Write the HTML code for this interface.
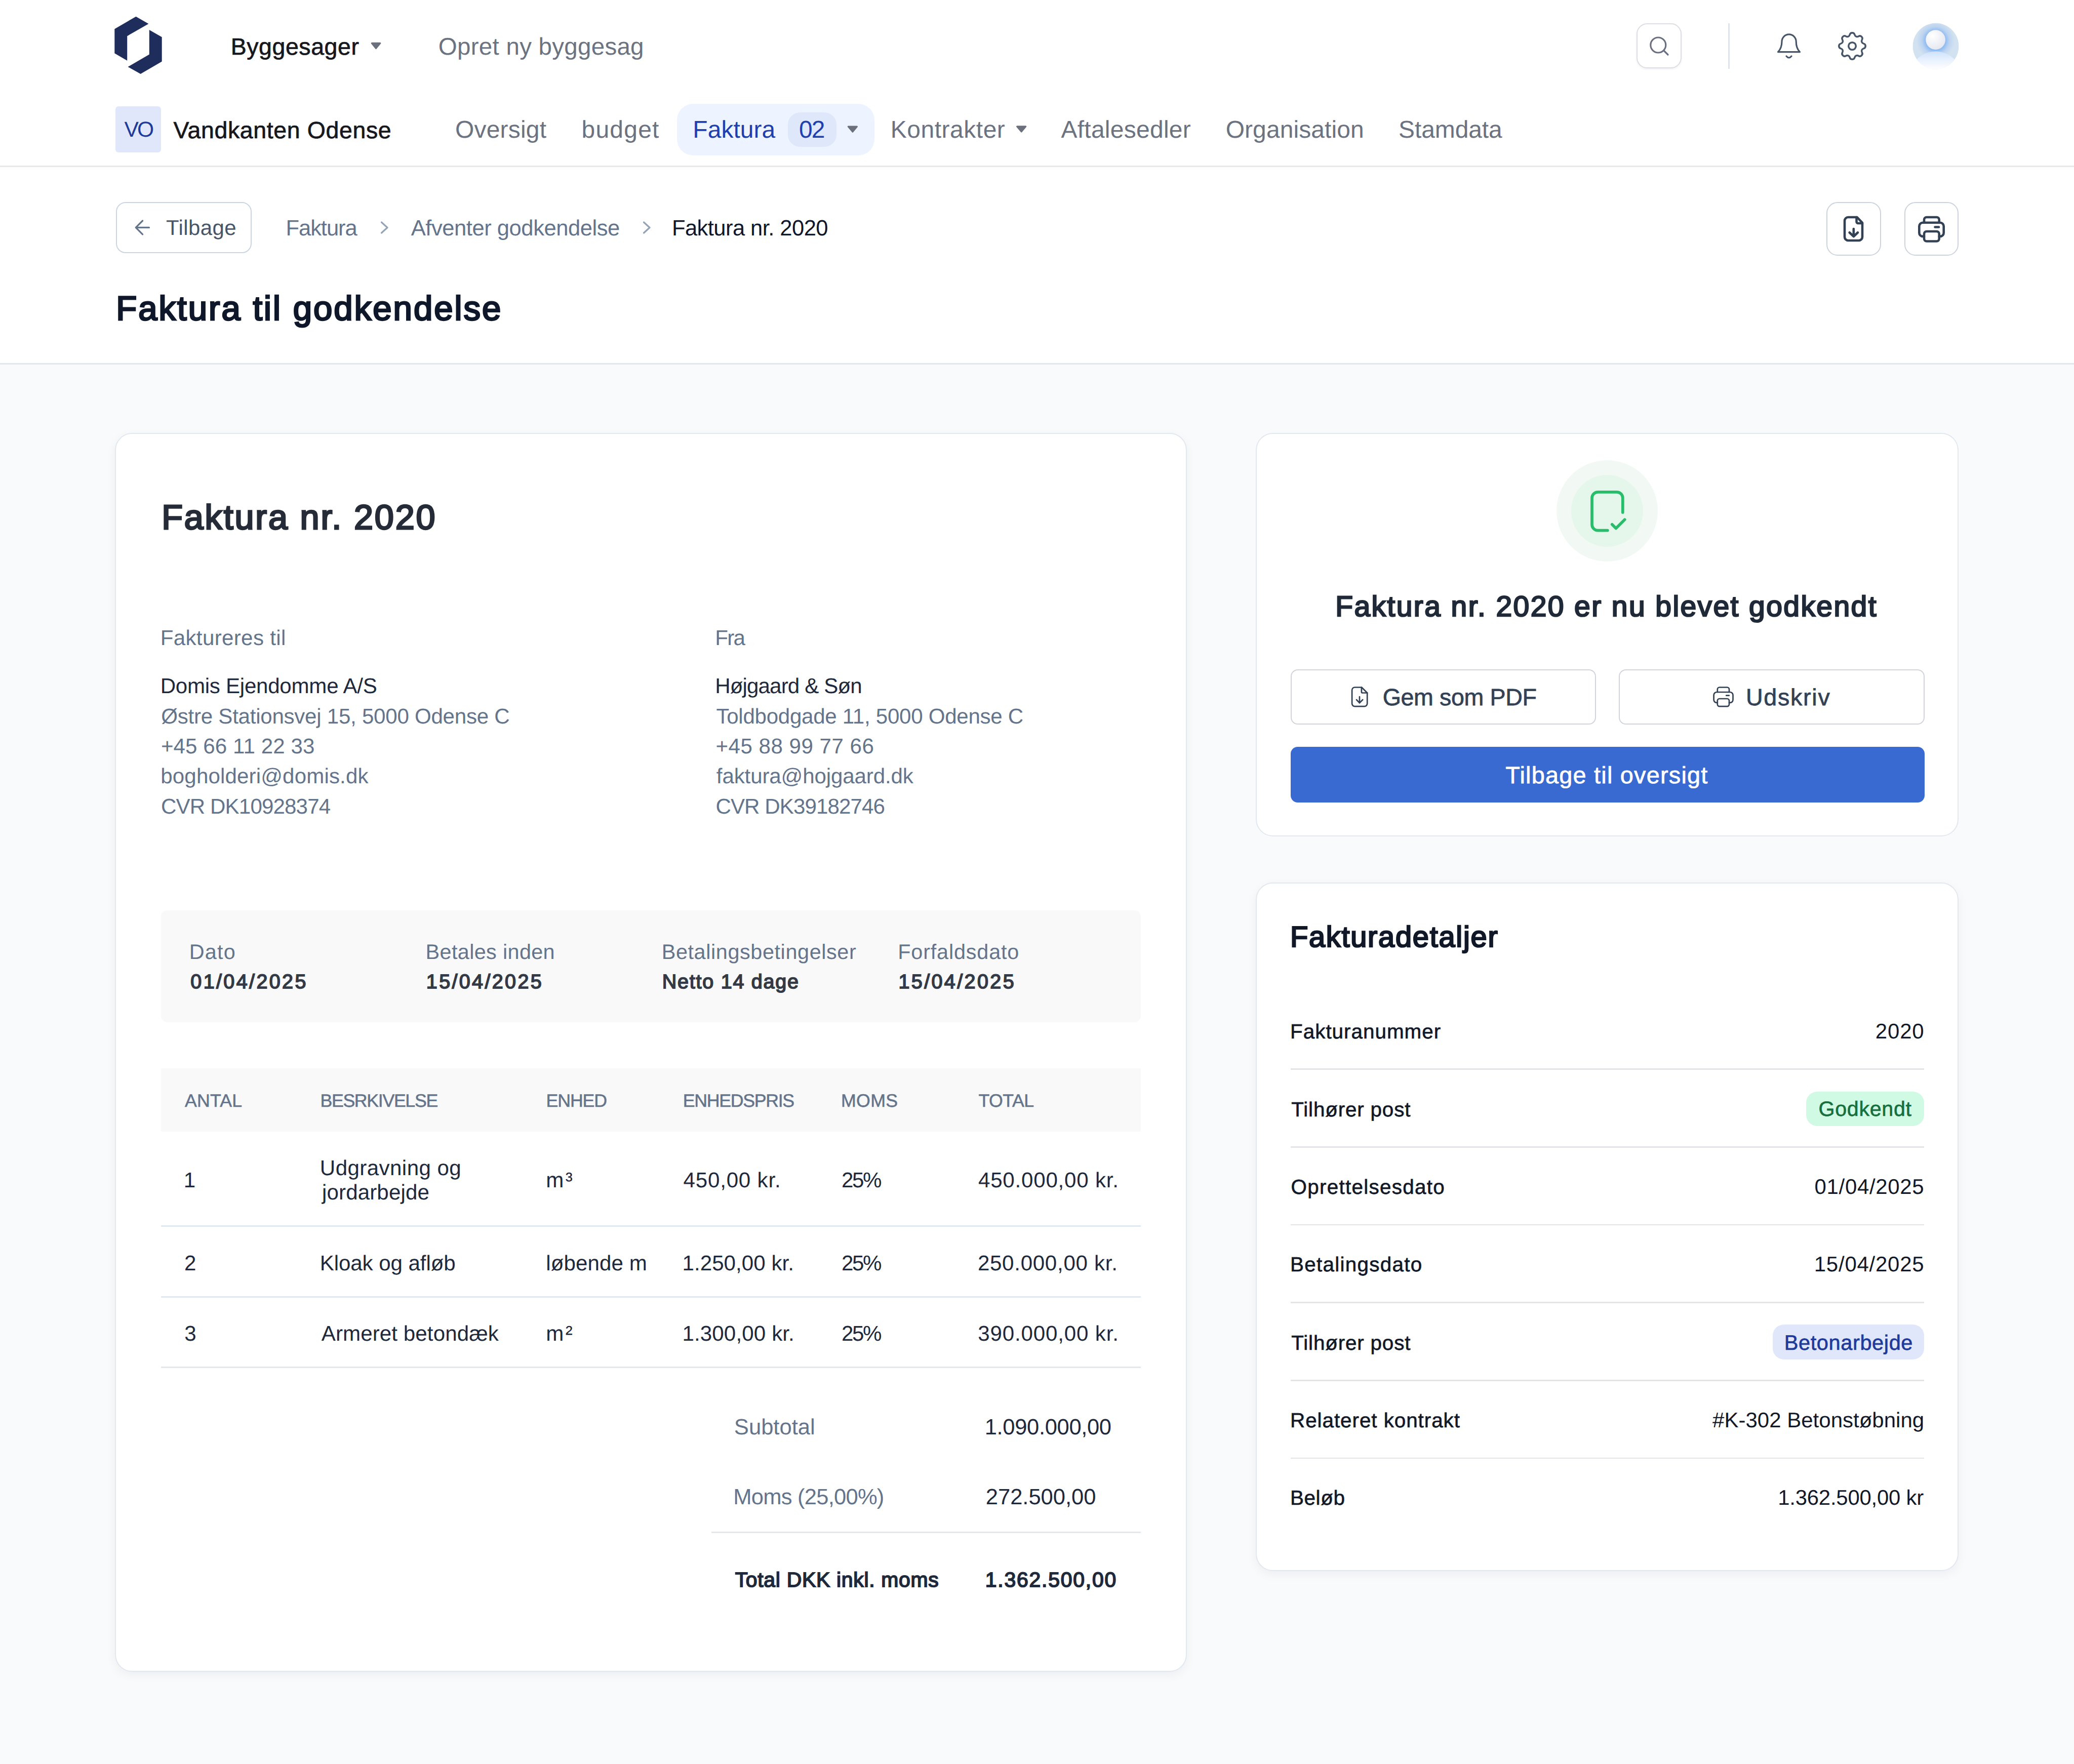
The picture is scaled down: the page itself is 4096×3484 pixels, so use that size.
<!DOCTYPE html>
<html><head><meta charset="utf-8"><style>
html,body{margin:0;padding:0;}
body{width:4096px;height:3484px;position:relative;overflow:hidden;background:#f8fafc;font-family:"Liberation Sans",sans-serif;}
.t{position:absolute;white-space:nowrap;line-height:1;text-rendering:geometricPrecision;}
.r{position:absolute;box-sizing:border-box;}
svg.ov{position:absolute;left:0;top:0;}
</style></head><body>
<div class="r" style="left:0px;top:0px;width:4096px;height:717px;background:#ffffff;"></div>
<div class="r" style="left:0px;top:717px;width:4096px;height:3px;background:#e1e7ef;"></div>
<div class="r" style="left:0px;top:327px;width:4096px;height:3px;background:#e8e9ec;"></div>
<div class="t" style="left:455.66px;top:69.18px;font-size:46.44px;color:#16181d;-webkit-text-stroke:0.74px #16181d;letter-spacing:0.60px;">Byggesager</div>
<div class="t" style="left:865.86px;top:68.63px;font-size:47.53px;color:#6b7280;letter-spacing:0.26px;">Opret ny byggesag</div>
<div class="r" style="left:3232px;top:46px;width:89px;height:89px;border:2.5px solid #dcdee3;border-radius:21px;background:#fff;box-shadow:0 2px 4px rgba(0,0,0,0.06);"></div>
<div class="r" style="left:3413px;top:46px;width:3px;height:90px;background:#dbe4f0;"></div>
<div class="r" style="left:228px;top:210px;width:90px;height:91px;background:#e0e7fa;border-radius:6px;"></div>
<div class="t" style="left:245.39px;top:235.14px;font-size:42.55px;color:#1e3a9a;">V</div>
<div class="t" style="left:271.09px;top:235.14px;font-size:42.55px;color:#1e3a9a;">O</div>
<div class="t" style="left:342.44px;top:233.88px;font-size:46.44px;color:#16181d;-webkit-text-stroke:0.74px #16181d;letter-spacing:0.64px;">Vandkanten Odense</div>
<div class="t" style="left:899.04px;top:232.95px;font-size:47.97px;color:#6b7280;letter-spacing:0.19px;">Oversigt</div>
<div class="t" style="left:1148.48px;top:232.95px;font-size:47.97px;color:#6b7280;letter-spacing:1.24px;">budget</div>
<div class="r" style="left:1337px;top:205px;width:390px;height:102px;background:#eef4ff;border-radius:32px;"></div>
<div class="t" style="left:1368.36px;top:232.95px;font-size:47.97px;color:#1e40af;letter-spacing:0.05px;">Faktura</div>
<div class="r" style="left:1556px;top:222px;width:96px;height:68px;background:#dfe7fb;border-radius:24px;"></div>
<div class="t" style="left:1578.08px;top:232.95px;font-size:47.97px;color:#1e40af;letter-spacing:-2.13px;">02</div>
<div class="t" style="left:1758.86px;top:232.95px;font-size:47.97px;color:#6b7280;letter-spacing:0.52px;">Kontrakter</div>
<div class="t" style="left:2095.46px;top:232.95px;font-size:47.97px;color:#6b7280;letter-spacing:0.27px;">Aftalesedler</div>
<div class="t" style="left:2420.64px;top:232.95px;font-size:47.97px;color:#6b7280;letter-spacing:0.10px;">Organisation</div>
<div class="t" style="left:2762.04px;top:232.95px;font-size:47.97px;color:#6b7280;letter-spacing:-0.08px;">Stamdata</div>
<div class="r" style="left:229px;top:399px;width:268px;height:101px;border:2px solid #cbd5e1;border-radius:19px;background:#fff;"></div>
<div class="t" style="left:327.95px;top:428.64px;font-size:41.96px;color:#475569;letter-spacing:0.43px;">Tilbage</div>
<div class="t" style="left:564.51px;top:429.77px;font-size:43.58px;color:#64748b;letter-spacing:-1.09px;">Faktura</div>
<div class="t" style="left:811.68px;top:429.77px;font-size:43.58px;color:#64748b;letter-spacing:-0.47px;">Afventer godkendelse</div>
<div class="t" style="left:1326.91px;top:429.77px;font-size:43.58px;color:#0f172a;letter-spacing:-0.58px;">Faktura nr. 2020</div>
<div class="r" style="left:3607px;top:399px;width:108px;height:106px;border:2.5px solid #cdd3dc;border-radius:22px;background:#fff;"></div>
<div class="r" style="left:3761px;top:399px;width:107px;height:106px;border:2.5px solid #cdd3dc;border-radius:22px;background:#fff;"></div>
<div class="t" style="left:229.14px;top:576.32px;font-size:67.13px;color:#0f172a;-webkit-text-stroke:3.02px #0f172a;letter-spacing:3.02px;">Faktura til godkendelse</div>
<div class="r" style="left:227px;top:855px;width:2117px;height:2447px;border:2.5px solid #e2e8f0;border-radius:34px;background:#fff;box-shadow:0 6px 20px rgba(15,23,42,0.05);"></div>
<div class="t" style="left:319.17px;top:988.24px;font-size:68.37px;color:#252b37;-webkit-text-stroke:3.08px #252b37;letter-spacing:2.84px;">Faktura nr. 2020</div>
<div class="t" style="left:316.63px;top:1239.22px;font-size:42.11px;color:#64748b;letter-spacing:0.34px;">Faktureres til</div>
<div class="t" style="left:316.63px;top:1333.72px;font-size:42.11px;color:#1e293b;letter-spacing:-0.27px;">Domis Ejendomme A/S</div>
<div class="t" style="left:318.32px;top:1393.52px;font-size:42.11px;color:#64748b;letter-spacing:-0.27px;">Østre Stationsvej 15, 5000 Odense C</div>
<div class="t" style="left:317.89px;top:1452.52px;font-size:42.11px;color:#64748b;letter-spacing:0.08px;">+45 66 11 22 33</div>
<div class="t" style="left:317.26px;top:1512.22px;font-size:42.11px;color:#64748b;letter-spacing:0.13px;">bogholderi@domis.dk</div>
<div class="t" style="left:317.89px;top:1572.12px;font-size:42.11px;color:#64748b;letter-spacing:-0.86px;">CVR DK10928374</div>
<div class="t" style="left:1412.13px;top:1239.22px;font-size:42.11px;color:#64748b;letter-spacing:-1.65px;">Fra</div>
<div class="t" style="left:1412.13px;top:1333.72px;font-size:42.11px;color:#1e293b;letter-spacing:-0.87px;">Højgaard & Søn</div>
<div class="t" style="left:1414.45px;top:1393.52px;font-size:42.11px;color:#64748b;letter-spacing:-0.29px;">Toldbodgade 11, 5000 Odense C</div>
<div class="t" style="left:1413.39px;top:1452.52px;font-size:42.11px;color:#64748b;letter-spacing:0.50px;">+45 88 99 77 66</div>
<div class="t" style="left:1414.87px;top:1512.22px;font-size:42.11px;color:#64748b;letter-spacing:-0.14px;">faktura@hojgaard.dk</div>
<div class="t" style="left:1413.39px;top:1572.12px;font-size:42.11px;color:#64748b;letter-spacing:-0.91px;">CVR DK39182746</div>
<div class="r" style="left:318px;top:1798px;width:1935px;height:221px;background:#f9f9fa;border-radius:12px;"></div>
<div class="t" style="left:373.69px;top:1860.14px;font-size:41.38px;color:#64748b;letter-spacing:1.22px;">Dato</div>
<div class="t" style="left:376.31px;top:1920.13px;font-size:39.51px;color:#333a46;-webkit-text-stroke:1.78px #333a46;letter-spacing:3.38px;">01/04/2025</div>
<div class="t" style="left:840.59px;top:1860.14px;font-size:41.38px;color:#64748b;letter-spacing:0.36px;">Betales inden</div>
<div class="t" style="left:841.83px;top:1920.13px;font-size:39.51px;color:#333a46;-webkit-text-stroke:1.78px #333a46;letter-spacing:3.35px;">15/04/2025</div>
<div class="t" style="left:1306.69px;top:1860.14px;font-size:41.38px;color:#64748b;letter-spacing:0.60px;">Betalingsbetingelser</div>
<div class="t" style="left:1307.73px;top:1920.13px;font-size:39.51px;color:#333a46;-webkit-text-stroke:1.78px #333a46;letter-spacing:1.76px;">Netto 14 dage</div>
<div class="t" style="left:1773.19px;top:1860.14px;font-size:41.38px;color:#64748b;letter-spacing:0.83px;">Forfaldsdato</div>
<div class="t" style="left:1774.43px;top:1920.13px;font-size:39.51px;color:#333a46;-webkit-text-stroke:1.78px #333a46;letter-spacing:3.39px;">15/04/2025</div>
<div class="r" style="left:318px;top:2110px;width:1935px;height:125px;background:#f9f9fa;"></div>
<div class="t" style="left:365.11px;top:2156.75px;font-size:35.71px;color:#64748b;-webkit-text-stroke:0.57px #64748b;letter-spacing:0.15px;">ANTAL</div>
<div class="t" style="left:632.43px;top:2156.75px;font-size:35.71px;color:#64748b;-webkit-text-stroke:0.57px #64748b;letter-spacing:-1.33px;">BESRKIVELSE</div>
<div class="t" style="left:1078.43px;top:2156.75px;font-size:35.71px;color:#64748b;-webkit-text-stroke:0.57px #64748b;letter-spacing:-1.07px;">ENHED</div>
<div class="t" style="left:1348.73px;top:2156.75px;font-size:35.71px;color:#64748b;-webkit-text-stroke:0.57px #64748b;letter-spacing:-1.31px;">ENHEDSPRIS</div>
<div class="t" style="left:1661.03px;top:2156.75px;font-size:35.71px;color:#64748b;-webkit-text-stroke:0.57px #64748b;letter-spacing:0.35px;">MOMS</div>
<div class="t" style="left:1932.39px;top:2156.75px;font-size:35.71px;color:#64748b;-webkit-text-stroke:0.57px #64748b;letter-spacing:-0.52px;">TOTAL</div>
<div class="r" style="left:318px;top:2420px;width:1935px;height:2.5px;background:#e2e8f0;"></div>
<div class="r" style="left:318px;top:2560px;width:1935px;height:2.5px;background:#e2e8f0;"></div>
<div class="r" style="left:318px;top:2699.2px;width:1935px;height:2.5px;background:#e2e8f0;"></div>
<div class="t" style="left:362.84px;top:2309.82px;font-size:42.11px;color:#1e293b;">1</div>
<div class="t" style="left:631.84px;top:2286.22px;font-size:42.11px;color:#1e293b;letter-spacing:0.41px;">Udgravning og</div>
<div class="t" style="left:636.05px;top:2334.42px;font-size:42.11px;color:#1e293b;letter-spacing:0.11px;">jordarbejde</div>
<div class="t" style="left:1078.26px;top:2309.82px;font-size:42.11px;color:#1e293b;letter-spacing:3.31px;">m³</div>
<div class="t" style="left:1349.55px;top:2309.82px;font-size:42.11px;color:#1e293b;letter-spacing:0.79px;">450,00 kr.</div>
<div class="t" style="left:1661.89px;top:2309.82px;font-size:42.11px;color:#1e293b;letter-spacing:-2.32px;">25%</div>
<div class="t" style="left:1931.95px;top:2309.82px;font-size:42.11px;color:#1e293b;letter-spacing:0.78px;">450.000,00 kr.</div>
<div class="t" style="left:363.89px;top:2473.82px;font-size:42.11px;color:#1e293b;">2</div>
<div class="t" style="left:631.63px;top:2473.82px;font-size:42.11px;color:#1e293b;letter-spacing:-0.08px;">Kloak og afløb</div>
<div class="t" style="left:1078.26px;top:2473.82px;font-size:42.11px;color:#1e293b;letter-spacing:0.09px;">løbende m</div>
<div class="t" style="left:1347.44px;top:2473.82px;font-size:42.11px;color:#1e293b;letter-spacing:0.05px;">1.250,00 kr.</div>
<div class="t" style="left:1661.89px;top:2473.82px;font-size:42.11px;color:#1e293b;letter-spacing:-2.32px;">25%</div>
<div class="t" style="left:1930.89px;top:2473.82px;font-size:42.11px;color:#1e293b;letter-spacing:0.70px;">250.000,00 kr.</div>
<div class="t" style="left:364.32px;top:2612.62px;font-size:42.11px;color:#1e293b;">3</div>
<div class="t" style="left:634.79px;top:2612.62px;font-size:42.11px;color:#1e293b;letter-spacing:0.08px;">Armeret betondæk</div>
<div class="t" style="left:1078.26px;top:2612.62px;font-size:42.11px;color:#1e293b;letter-spacing:3.31px;">m²</div>
<div class="t" style="left:1347.44px;top:2612.62px;font-size:42.11px;color:#1e293b;letter-spacing:0.12px;">1.300,00 kr.</div>
<div class="t" style="left:1661.89px;top:2612.62px;font-size:42.11px;color:#1e293b;letter-spacing:-2.32px;">25%</div>
<div class="t" style="left:1931.32px;top:2612.62px;font-size:42.11px;color:#1e293b;letter-spacing:0.82px;">390.000,00 kr.</div>
<div class="t" style="left:1449.84px;top:2797.97px;font-size:43.58px;color:#64748b;">Subtotal</div>
<div class="t" style="left:1944.73px;top:2797.97px;font-size:43.58px;color:#1e293b;letter-spacing:-0.37px;">1.090.000,00</div>
<div class="t" style="left:1448.31px;top:2935.97px;font-size:43.58px;color:#64748b;letter-spacing:-0.79px;">Moms (25,00%)</div>
<div class="t" style="left:1946.82px;top:2935.97px;font-size:43.58px;color:#1e293b;letter-spacing:-0.05px;">272.500,00</div>
<div class="r" style="left:1405px;top:3025px;width:848px;height:2.5px;background:#e2e8f0;"></div>
<div class="t" style="left:1451.70px;top:3099.74px;font-size:40.88px;color:#1e293b;-webkit-text-stroke:1.84px #1e293b;letter-spacing:0.72px;">Total DKK inkl. moms</div>
<div class="t" style="left:1945.85px;top:3099.74px;font-size:40.88px;color:#1e293b;-webkit-text-stroke:1.84px #1e293b;letter-spacing:1.79px;">1.362.500,00</div>
<div class="r" style="left:2480px;top:855px;width:1388px;height:797px;border:2.5px solid #e2e8f0;border-radius:34px;background:#fff;"></div>
<div class="r" style="left:3074px;top:909px;width:200px;height:200px;background:#f2f9f4;border-radius:50%;"></div>
<div class="r" style="left:3103px;top:938px;width:142px;height:142px;background:#e5f6ea;border-radius:50%;"></div>
<div class="t" style="left:2637.22px;top:1169.86px;font-size:56.96px;color:#1f2937;-webkit-text-stroke:2.56px #1f2937;letter-spacing:2.43px;">Faktura nr. 2020 er nu blevet godkendt</div>
<div class="r" style="left:2549px;top:1322px;width:603px;height:109px;border:2.5px solid #d1d5db;border-radius:14px;background:#fff;"></div>
<div class="r" style="left:3197px;top:1322px;width:604px;height:109px;border:2.5px solid #d1d5db;border-radius:14px;background:#fff;"></div>
<div class="t" style="left:2730.74px;top:1354.35px;font-size:46.59px;color:#334155;-webkit-text-stroke:0.75px #334155;letter-spacing:-0.38px;">Gem som PDF</div>
<div class="t" style="left:3447.88px;top:1354.35px;font-size:46.59px;color:#334155;-webkit-text-stroke:0.75px #334155;letter-spacing:1.77px;">Udskriv</div>
<div class="r" style="left:2549px;top:1475px;width:1252px;height:110px;background:#386ad1;border-radius:14px;"></div>
<div class="t" style="left:2973.30px;top:1507.81px;font-size:46.87px;color:#ffffff;-webkit-text-stroke:0.75px #ffffff;letter-spacing:1.22px;">Tilbage til oversigt</div>
<div class="r" style="left:2480px;top:1743px;width:1388px;height:1360px;border:2.5px solid #e2e8f0;border-radius:34px;background:#fff;box-shadow:0 6px 20px rgba(15,23,42,0.05);"></div>
<div class="t" style="left:2547.88px;top:1822.94px;font-size:57.79px;color:#111827;-webkit-text-stroke:2.60px #111827;letter-spacing:1.74px;">Fakturadetaljer</div>
<div class="t" style="left:2548.09px;top:2016.71px;font-size:40.43px;color:#111827;-webkit-text-stroke:0.65px #111827;letter-spacing:0.98px;">Fakturanummer</div>
<div class="t" style="left:2550.31px;top:2170.81px;font-size:40.43px;color:#111827;-webkit-text-stroke:0.65px #111827;letter-spacing:0.81px;">Tilhører post</div>
<div class="t" style="left:2549.50px;top:2324.31px;font-size:40.43px;color:#111827;-webkit-text-stroke:0.65px #111827;letter-spacing:1.27px;">Oprettelsesdato</div>
<div class="t" style="left:2548.09px;top:2477.41px;font-size:40.43px;color:#111827;-webkit-text-stroke:0.65px #111827;letter-spacing:1.27px;">Betalingsdato</div>
<div class="t" style="left:2550.31px;top:2631.51px;font-size:40.43px;color:#111827;-webkit-text-stroke:0.65px #111827;letter-spacing:0.81px;">Tilhører post</div>
<div class="t" style="left:2548.09px;top:2784.91px;font-size:40.43px;color:#111827;-webkit-text-stroke:0.65px #111827;letter-spacing:0.93px;">Relateret kontrakt</div>
<div class="t" style="left:2548.09px;top:2938.31px;font-size:40.43px;color:#111827;-webkit-text-stroke:0.65px #111827;letter-spacing:0.55px;">Beløb</div>
<div class="r" style="left:2549px;top:2110.2px;width:1251px;height:2.699999999999818px;background:#e3e4e8;"></div>
<div class="r" style="left:2549px;top:2263.9px;width:1251px;height:2.699999999999818px;background:#e3e4e8;"></div>
<div class="r" style="left:2549px;top:2417.6px;width:1251px;height:2.699999999999818px;background:#e3e4e8;"></div>
<div class="r" style="left:2549px;top:2571.3px;width:1251px;height:2.699999999999818px;background:#e3e4e8;"></div>
<div class="r" style="left:2549px;top:2725px;width:1251px;height:2.699999999999818px;background:#e3e4e8;"></div>
<div class="r" style="left:2549px;top:2878.7px;width:1251px;height:2.699999999999818px;background:#e3e4e8;"></div>
<div class="t" style="left:3703.80px;top:2015.74px;font-size:41.96px;color:#111827;letter-spacing:0.84px;">2020</div>
<div class="r" style="left:3567px;top:2156px;width:233px;height:68px;background:#d1fae5;border-radius:22px;"></div>
<div class="t" style="left:3591.57px;top:2170.20px;font-size:41.15px;color:#176f3d;-webkit-text-stroke:0.66px #176f3d;letter-spacing:0.71px;">Godkendt</div>
<div class="t" style="left:3583.62px;top:2323.34px;font-size:41.96px;color:#111827;letter-spacing:0.67px;">01/04/2025</div>
<div class="t" style="left:3582.75px;top:2476.44px;font-size:41.96px;color:#111827;letter-spacing:0.77px;">15/04/2025</div>
<div class="r" style="left:3501px;top:2616px;width:299px;height:69px;background:#e0e7fa;border-radius:22px;"></div>
<div class="t" style="left:3523.71px;top:2630.54px;font-size:41.57px;color:#1e3a9a;-webkit-text-stroke:0.67px #1e3a9a;letter-spacing:0.59px;">Betonarbejde</div>
<div class="t" style="left:3382.09px;top:2783.94px;font-size:41.96px;color:#111827;letter-spacing:0.03px;">#K-302 Betonstøbning</div>
<div class="t" style="left:3511.16px;top:2937.46px;font-size:41.82px;color:#111827;letter-spacing:-0.18px;">1.362.500,00 kr</div>
<svg class="ov" width="4096" height="3484" viewBox="0 0 4096 3484">
<defs>
<radialGradient id="avbg" gradientUnits="userSpaceOnUse" cx="3822.6" cy="80" r="38"><stop offset="0.5" stop-color="#8dbaf2"/><stop offset="0.72" stop-color="#bcd4f0"/><stop offset="1" stop-color="#d3e2f0"/></radialGradient>
<linearGradient id="avbody" gradientUnits="userSpaceOnUse" x1="0" y1="101" x2="0" y2="137"><stop offset="0" stop-color="#cce0fb"/><stop offset="0.4" stop-color="#e4effd"/><stop offset="0.8" stop-color="#f6f9fe"/><stop offset="1" stop-color="#fdfeff"/></linearGradient>
<radialGradient id="avhead" cx="0.35" cy="0.3" r="0.8"><stop offset="0" stop-color="#ffffff"/><stop offset="1" stop-color="#e3e6ef"/></radialGradient>
<clipPath id="avclip"><circle cx="3823" cy="91.2" r="45.6"/></clipPath>
</defs>
<!-- logo -->
<g fill="#1f2d5c">
<polygon points="226.3,57.2 268.5,32.7 293.4,47.0 251.2,71.2 251.2,119.8 226.3,105.3"/>
<polygon points="294.8,59 319.7,73.3 319.7,121.6 277.6,146.1 252.6,132 294.8,107.5"/>
</g>
<!-- triangles -->
<g fill="#6c707c" stroke="#6c707c" stroke-width="3" stroke-linejoin="round">
<polygon points="734.2,85.3 750.9,85.3 742.5,95.6"/>
<polygon points="1675.3,250 1692.5,250 1683.9,260.3"/>
<polygon points="2008.6,249.8 2025.8,249.8 2017.2,260.1"/>
</g>
<!-- search icon -->
<g fill="none" stroke="#6b7080" stroke-width="3.2" stroke-linecap="round">
<circle cx="3274.8" cy="89" r="15"/>
<line x1="3286" y1="100" x2="3294" y2="108"/>
</g>
<!-- bell -->
<g fill="none" stroke="#475569" stroke-width="3.2" stroke-linecap="round" stroke-linejoin="round">
<path d="M3511.5,102.6 H3554.5 M3511.5,102.6 C3517,97 3519,90 3519,82 A14.1,14.1 0 0 1 3547.2,82 C3547.2,90 3549,97 3554.5,102.6"/>
<path d="M3528,111 Q3533,117 3538,111"/>
</g>
<!-- gear -->
<svg x="3623" y="56" width="70" height="70" viewBox="0 0 24 24" fill="none" stroke="#475569" stroke-width="1.2" stroke-linecap="round" stroke-linejoin="round">
<path d="M10.325 4.317c.426 -1.756 2.924 -1.756 3.35 0a1.724 1.724 0 0 0 2.573 1.066c1.543 -.94 3.31 .826 2.37 2.37a1.724 1.724 0 0 0 1.065 2.572c1.756 .426 1.756 2.924 0 3.35a1.724 1.724 0 0 0 -1.066 2.573c.94 1.543 -.826 3.31 -2.37 2.37a1.724 1.724 0 0 0 -2.572 1.065c-.426 1.756 -2.924 1.756 -3.35 0a1.724 1.724 0 0 0 -2.573 -1.066c-1.543 .94 -3.31 -.826 -2.37 -2.37a1.724 1.724 0 0 0 -1.065 -2.572c-1.756 -.426 -1.756 -2.924 0 -3.35a1.724 1.724 0 0 0 1.066 -2.573c-.94 -1.543 .826 -3.31 2.37 -2.37c1 .608 2.296 .07 2.572 -1.065z"/>
<circle cx="12" cy="12" r="2.5"/>
</svg>
<!-- avatar -->
<g clip-path="url(#avclip)">
<circle cx="3823" cy="91.2" r="45.6" fill="url(#avbg)"/>
<circle cx="3822.6" cy="153.1" r="51.7" fill="url(#avbody)"/>
<circle cx="3822.6" cy="78.6" r="19.4" fill="url(#avhead)"/>
</g>
<!-- breadcrumb arrow & chevrons -->
<g fill="none" stroke="#64748b" stroke-width="3.2" stroke-linecap="round" stroke-linejoin="round">
<path d="M294.5,449.4 H268.2 M281.6,436 L268.2,449.4 L281.6,462.8"/>
</g>
<g fill="none" stroke="#94a3b8" stroke-width="3.2" stroke-linecap="round" stroke-linejoin="round">
<path d="M753.5,439 L765,449.5 L753.5,460"/>
<path d="M1271.5,439 L1283,449.5 L1271.5,460"/>
</g>
<!-- header file-down icon -->
<g fill="none" stroke="#334155" stroke-width="4.6" stroke-linecap="round" stroke-linejoin="round">
<path d="M3667.5,429 H3650 a7,7 0 0 0 -7,7 V468 a7,7 0 0 0 7,7 H3671 a7,7 0 0 0 7,-7 V440 Z"/>
<path d="M3666.5,429 V438 a3,3 0 0 0 3,3 H3678"/>
<path d="M3660.8,452 V466.5 M3652.6,459.3 L3660.8,467 L3669,459.3"/>
</g>
<!-- header printer icon -->
<g fill="none" stroke="#334155" stroke-width="4.6" stroke-linecap="round" stroke-linejoin="round">
<path d="M3800,439.8 V434 a5,5 0 0 1 5,-5 H3824.7 a5,5 0 0 1 5,5 V439.8"/>
<path d="M3800,466.9 H3797.3 a7,7 0 0 1 -7,-7 V446.8 a7,7 0 0 1 7,-7 H3831.7 a7,7 0 0 1 7,7 V459.9 a7,7 0 0 1 -7,7 H3829.7"/>
<rect x="3800" y="457" width="29.7" height="19.5" rx="5"/>
<line x1="3821.5" y1="448.5" x2="3829" y2="448.5"/>
</g>
<!-- green icon -->
<g fill="none" stroke="#28bd6a" stroke-width="5.7" stroke-linecap="round" stroke-linejoin="round">
<path d="M3204.8,1011.9 V983.5 a11.7,11.7 0 0 0 -11.7,-11.7 H3155.7 a11.7,11.7 0 0 0 -11.7,11.7 V1035.9 a11.7,11.7 0 0 0 11.7,11.7 H3174.8"/>
<path d="M3183.7,1035.7 L3191.4,1043.5 L3208.7,1026.2"/>
</g>
<!-- pdf icon in card -->
<g fill="none" stroke="#334155" stroke-width="2.7" stroke-linecap="round" stroke-linejoin="round">
<path d="M2689.2,1357.5 H2675.6 a5.5,5.5 0 0 0 -5.5,5.5 V1389.6 a5.5,5.5 0 0 0 5.5,5.5 H2694.7 a5.5,5.5 0 0 0 5.5,-5.5 V1368.5 Z"/>
<path d="M2688.9,1357.5 V1366.5 a2,2 0 0 0 2,2 H2700.2"/>
<path d="M2685,1376 V1388.4 M2679,1382 L2685,1388.4 L2691.2,1382"/>
</g>
<!-- printer icon in card -->
<g fill="none" stroke="#334155" stroke-width="2.7" stroke-linecap="round" stroke-linejoin="round">
<path d="M3391.8,1367 V1361.5 a4,4 0 0 1 4,-4 H3411 a4,4 0 0 1 4,4 V1367"/>
<path d="M3391.8,1387.9 H3390.4 a5.8,5.8 0 0 1 -5.8,-5.8 V1372.8 a5.8,5.8 0 0 1 5.8,-5.8 H3416.7 a5.8,5.8 0 0 1 5.8,5.8 V1382.1 a5.8,5.8 0 0 1 -5.8,5.8 H3415"/>
<rect x="3391.8" y="1380" width="23.2" height="15.1" rx="4"/>
<line x1="3409.2" y1="1373.7" x2="3414.8" y2="1373.7"/>
</g>
</svg>

</body></html>
